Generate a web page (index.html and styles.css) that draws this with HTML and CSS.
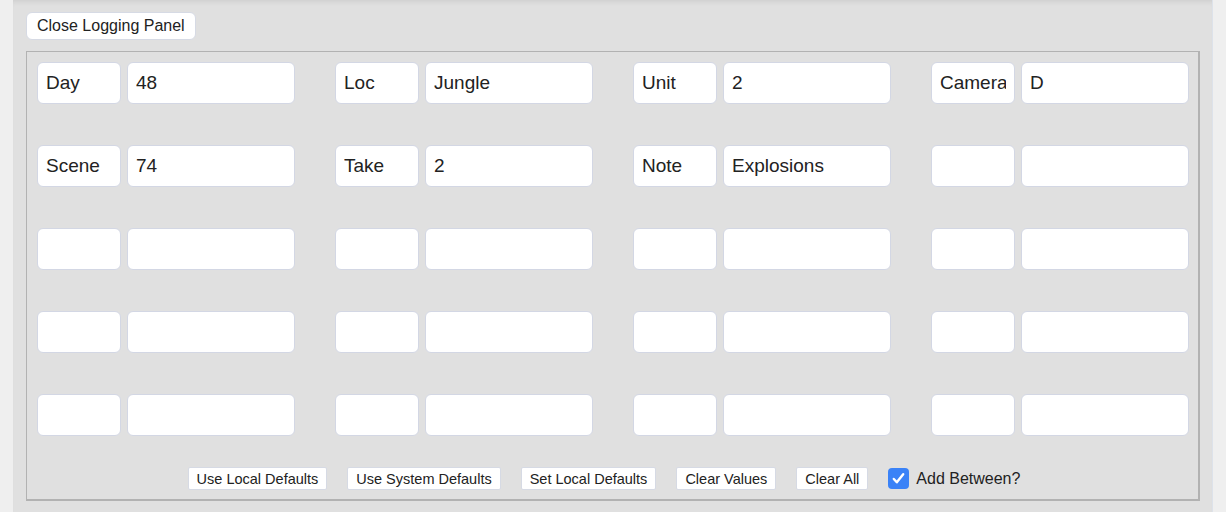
FILE: index.html
```html
<!DOCTYPE html>
<html lang="en">
<head>
    <meta charset="UTF-8">
    <title>Logging Panel</title>
    <link rel="stylesheet" href="styles.css">
</head>
<body>
    <div class="main">
        <button class="close-btn">Close Logging Panel</button>

        <div class="log-panel">
            <div class="fields" id="fields">
                <!-- filled by script below -->
            </div>

            <div class="actions">
                <button class="small-btn">Use Local Defaults</button>
                <button class="small-btn">Use System Defaults</button>
                <button class="small-btn">Set Local Defaults</button>
                <button class="small-btn">Clear Values</button>
                <button class="small-btn">Clear All</button>
                <label class="check">
                    <span class="check-box">
                        <svg width="15" height="15" viewBox="0 0 16 16" fill="none" stroke="#fff" stroke-width="2.6" stroke-linecap="round" stroke-linejoin="round">
                            <path d="M3 8.5l3.2 3.5L13 3.5"/>
                        </svg>
                    </span>
                    Add Between?
                </label>
            </div>
        </div>
    </div>

    <script>
        // key / value pairs, row by row
        const entries = [
            ["Day", "48"], ["Loc", "Jungle"], ["Unit", "2"], ["Camera", "D"],
            ["Scene", "74"], ["Take", "2"], ["Note", "Explosions"]
        ];

        const fields = document.getElementById('fields');
        for (let i = 0; i < 20; i++) {
            const e = entries[i] || ["", ""];
            fields.innerHTML += `
                <div class="field">
                    <input class="key" type="text" value="${e[0]}">
                    <input class="val" type="text" value="${e[1]}">
                </div>
            `;
        }
    </script>
</body>
</html>
```

FILE: styles.css
```css
* {
    margin: 0;
    padding: 0;
    box-sizing: border-box;
}

body {
    background: #efefef;
    font-family: "Liberation Sans", Arial, sans-serif;
    color: #222;
    padding: 0 13px;
    height: 512px;
    overflow: hidden;
}

.main {
    width: 1200px;
    height: 100%;
    background: #e0e0e0;
    border-right: 1px solid #dde2ea;
    padding: 12px 12px 0 13px;
    box-shadow: inset 0 5px 5px -3px rgba(0, 0, 0, 0.08);
}

.close-btn {
    font-family: inherit;
    font-size: 16px;
    color: #222;
    background: #fff;
    border: 1px solid #d6dae4;
    border-radius: 6px;
    height: 28px;
    padding: 0 10px;
}

.log-panel {
    margin-top: 11px;
    width: 1174px;
    border: 1px solid #b2b2b2;
    border-width: 1px 2px 2px 1px;
    padding: 10px 9px 9px 10px;
}

.fields {
    display: grid;
    grid-template-columns: repeat(4, 258px);
    column-gap: 40px;
    row-gap: 41px;
}

.field {
    display: flex;
    gap: 6px;
}

.field input {
    font-family: inherit;
    font-size: 19px;
    color: #222;
    height: 42px;
    background: #fff;
    border: 1px solid #d3d7e4;
    border-radius: 6px;
    padding: 0 8px;
    outline: none;
}

.field .key {
    width: 84px;
}

.field .val {
    width: 168px;
}

.actions {
    margin-top: 31px;
    display: flex;
    justify-content: center;
    align-items: center;
    gap: 20px;
    padding-right: 18px;
}

.small-btn {
    font-family: inherit;
    font-size: 14.5px;
    color: #222;
    background: #fff;
    border: 1px solid #d6dae4;
    border-radius: 2px;
    height: 23px;
    padding: 0 8px;
}

.check {
    display: flex;
    align-items: center;
    gap: 7px;
    font-size: 16px;
    color: #222;
}

.check-box {
    width: 21px;
    height: 21px;
    border-radius: 4px;
    background: #3a82f7;
    display: flex;
    align-items: center;
    justify-content: center;
}
```
